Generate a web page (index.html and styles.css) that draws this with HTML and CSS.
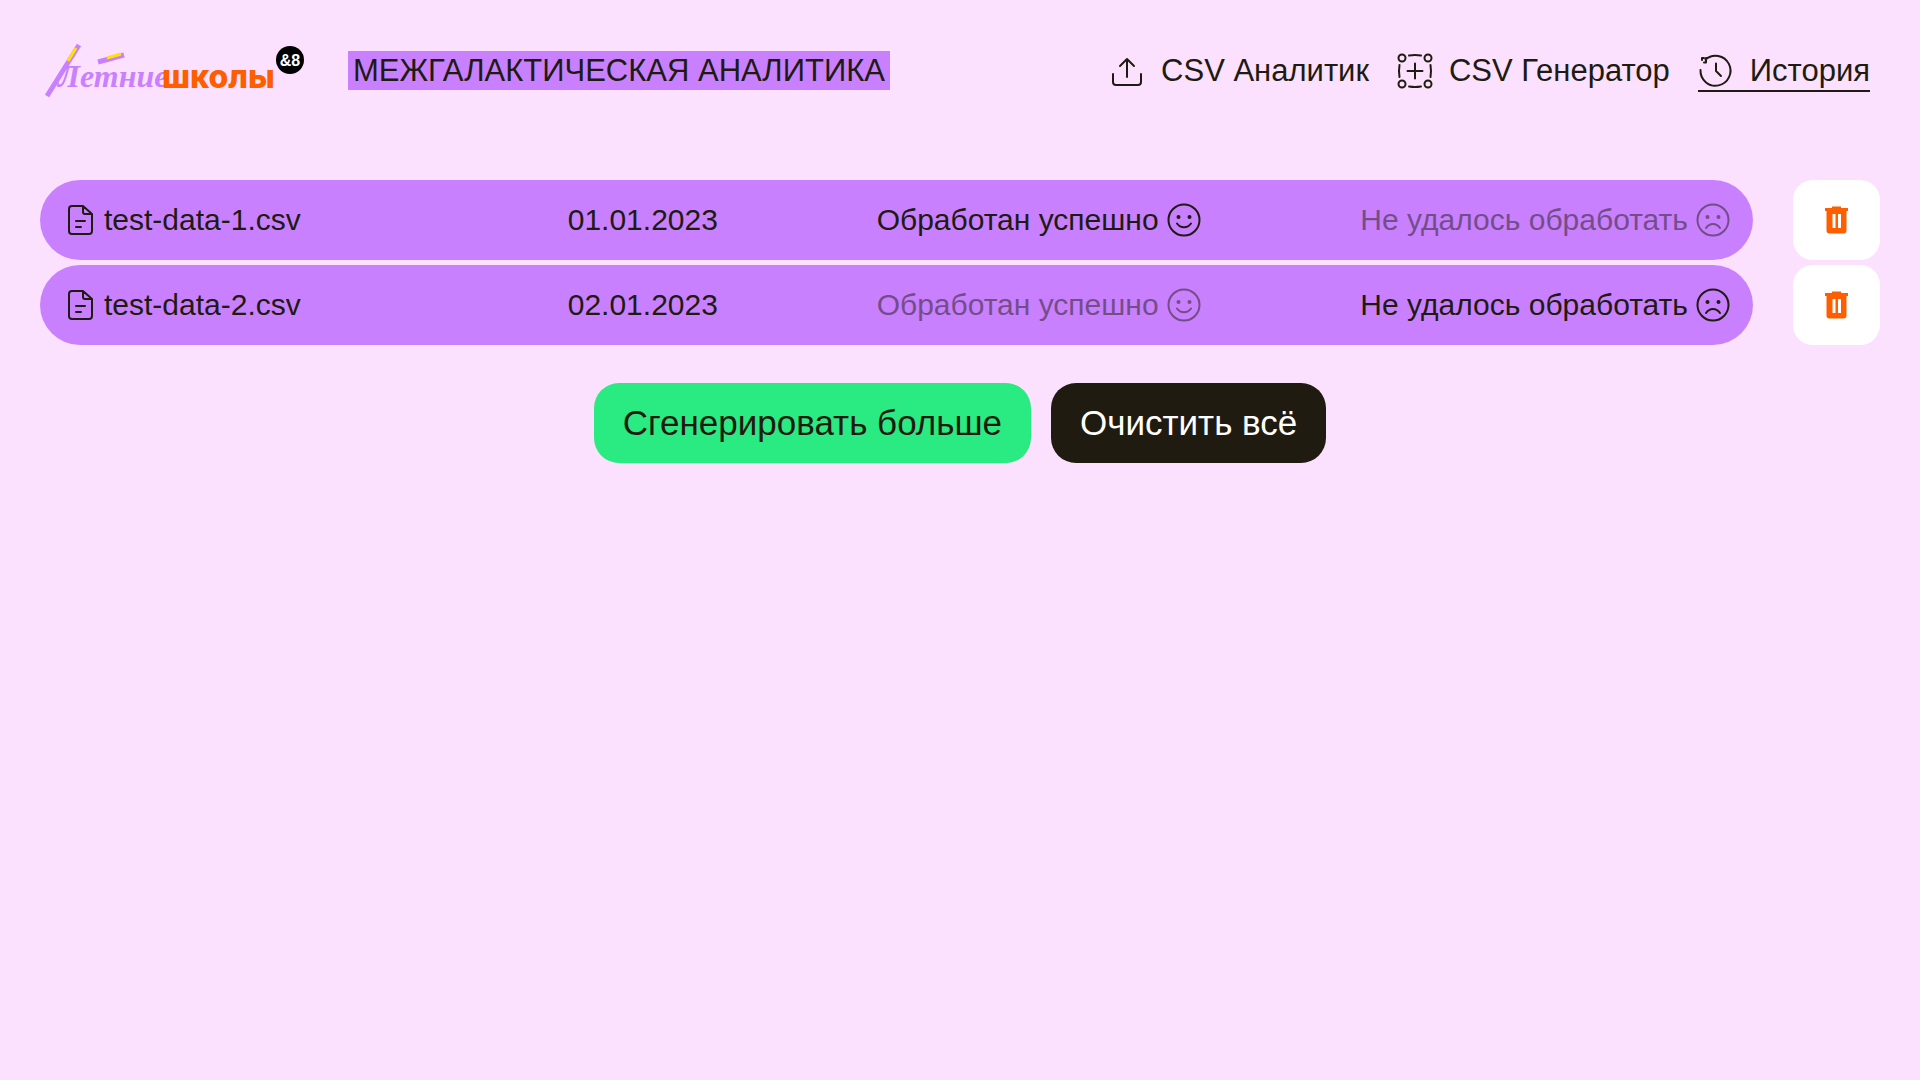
FILE: index.html
```html
<!DOCTYPE html>
<html lang="ru">
<head>
<meta charset="utf-8">
<meta name="viewport" content="width=device-width, initial-scale=1">
<title>Межгалактическая аналитика</title>
<link rel="stylesheet" href="styles.css">
</head>
<body>
<svg class="sprite" aria-hidden="true">
  <symbol id="file" viewBox="0 0 32 36"><path d="M19 4H8a3 3 0 0 0-3 3v22a3 3 0 0 0 3 3h17a3 3 0 0 0 3-3V12zM19 4v6a2 2 0 0 0 2 2h7M12 19h9M12 25h5"/></symbol>
  <symbol id="smile" viewBox="0 0 36 36"><circle cx="18" cy="18" r="15.5"/><path d="M11 21.5c3.500 5 10.500 5 14 0"/><g class="dot"><circle cx="12.500" cy="15" r="2"/><circle cx="23.500" cy="15" r="2"/></g></symbol>
  <symbol id="sad" viewBox="0 0 36 36"><circle cx="18" cy="18" r="15.5"/><path d="M11 26c3.500-5.500 10.500-5.500 14 0"/><g class="dot"><circle cx="12.500" cy="15" r="2"/><circle cx="23.500" cy="15" r="2"/></g></symbol>
  <symbol id="trash" viewBox="0 0 28 28"><path d="M2 2h7V.500h9V2h7v3H2zM3.500 5h20v19.500a3 3 0 0 1-3 3h-14a3 3 0 0 1-3-3zM9.500 8v14h3V8zM15 8v14h3V8z"/></symbol>
</svg>
<header class="header">
  <a class="logo" href="#" aria-label="Летние школы">
    <svg width="264" height="60" viewBox="0 0 264 60">
      <text class="logo-script" x="18" y="47">Летние</text>
      <text class="logo-block" x="122" y="48">школы</text>
      <path class="brush" d="M7 56 L39 5 M58 22l26-7"/>
      <path class="glow" d="M36 8l-8 13M67 18l14-4"/>
      <circle cx="250" cy="20" r="14"/>
      <text class="logo-badge" x="250" y="26">&amp;8</text>
    </svg>
  </a>
  <h1 class="title">МЕЖГАЛАКТИЧЕСКАЯ АНАЛИТИКА</h1>
  <nav class="nav">
    <a class="nav-link" href="#"><svg class="icon" viewBox="0 0 36 36"><path d="M4 21v8a3 3 0 0 0 3 3h22a3 3 0 0 0 3-3v-8M18 24V6M11 13l7-7 7 7"/></svg>CSV Аналитик</a>
    <a class="nav-link" href="#"><svg class="icon" viewBox="0 0 36 36"><circle cx="5" cy="5" r="3.500"/><circle cx="31" cy="5" r="3.500"/><circle cx="5" cy="31" r="3.500"/><circle cx="31" cy="31" r="3.500"/><path d="M12 2.500q6-1 12 0M12 33.500q6 1 12 0M2.500 12q-1 6 0 12M33.500 12q1 6 0 12M18 10.500v15M10.500 18h15"/></svg>CSV Генератор</a>
    <a class="nav-link active" href="#" aria-current="page"><svg class="icon" viewBox="0 0 36 36"><path d="M2.500 17a15 15 0 1 0 5-10.500M7.500 9.500H6M8 5v4.500M4 7V5h2M18 10.500v7.500l5 5"/></svg>История</a>
  </nav>
</header>
<main class="main">
  <ul class="history">
    <li class="entry">
      <div class="record">
        <span class="file"><svg class="icon-file"><use href="#file"/></svg>test-data-1.csv</span>
        <span>01.01.2023</span>
        <span class="status">Обработан успешно<svg class="icon"><use href="#smile"/></svg></span>
        <span class="status off">Не удалось обработать<svg class="icon"><use href="#sad"/></svg></span>
      </div>
      <button class="remove" type="button" aria-label="Удалить test-data-1.csv"><svg class="icon-trash"><use href="#trash"/></svg></button>
    </li>
    <li class="entry">
      <div class="record">
        <span class="file"><svg class="icon-file"><use href="#file"/></svg>test-data-2.csv</span>
        <span>02.01.2023</span>
        <span class="status off">Обработан успешно<svg class="icon"><use href="#smile"/></svg></span>
        <span class="status">Не удалось обработать<svg class="icon"><use href="#sad"/></svg></span>
      </div>
      <button class="remove" type="button" aria-label="Удалить test-data-2.csv"><svg class="icon-trash"><use href="#trash"/></svg></button>
    </li>
  </ul>
  <div class="actions">
    <button class="button generate" type="button">Сгенерировать больше</button>
    <button class="button clear" type="button">Очистить всё</button>
  </div>
</main>
</body>
</html>
```
FILE: styles.css
```css
* { box-sizing: border-box; }
body {
  margin: 0;
  min-height: 100vh;
  background: #fce1ff;
  color: #201b10;
  font: 30px/36px "Liberation Sans", Arial, sans-serif;
}
.sprite { position: absolute; width: 0; height: 0; }
.header {
  display: flex;
  align-items: center;
  height: 140px;
  padding: 0 50px 0 40px;
}
.logo { display: flex; margin-right: 44px; }
.logo-script { font: italic bold 32px "Liberation Serif", serif; fill: #c980ff; }
.logo-block { font: 800 32px Inter, sans-serif; fill: #ff5e00; }
.logo-badge { font: bold 16px "Liberation Sans", sans-serif; fill: #fff; text-anchor: middle; }
.brush { fill: none; stroke: #c980ff; stroke-width: 5; }
.glow { fill: none; stroke: #ffe200; stroke-width: 3; }
.title {
  margin: 0;
  padding: 0 5px;
  background: #c980ff;
  font-size: 31px;
  font-weight: 400;
  line-height: 39px;
}
.nav { display: flex; gap: 28px; margin-left: auto; font-size: 31px; }
.nav-link {
  display: flex;
  align-items: center;
  gap: 16px;
  padding: 5px 0 1px;
  border-bottom: 2px solid transparent;
  color: inherit;
  text-decoration: none;
}
.active { border-color: #201b10; }
.icon, .icon-file {
  width: 36px;
  height: 36px;
  fill: none;
  stroke: currentColor;
  stroke-width: 2;
  stroke-linecap: round;
  stroke-linejoin: round;
}
.icon-file { width: 32px; }
.dot { fill: currentColor; stroke: none; }
.main { padding: 40px; }
.history {
  display: flex;
  flex-direction: column;
  gap: 5px;
  margin: 0;
  padding: 0;
  list-style: none;
}
.entry { display: flex; gap: 40px; }
.record {
  display: flex;
  flex: 1;
  align-items: center;
  justify-content: space-between;
  height: 80px;
  padding: 0 22px 0 24px;
  border-radius: 40px;
  background: #c980ff;
}
.file { display: flex; align-items: center; gap: 8px; width: 345px; }
.status { display: flex; align-items: center; gap: 7px; }
.off { opacity: .5; }
.remove {
  display: grid;
  place-items: center;
  width: 87px;
  border: 0;
  border-radius: 20px;
  background: #fff;
}
.icon-trash { width: 28px; height: 28px; fill: #ff5e00; fill-rule: evenodd; }
.actions { display: flex; justify-content: center; gap: 20px; margin-top: 38px; }
.button {
  height: 80px;
  padding: 0 29px;
  border: 0;
  border-radius: 25px;
  color: inherit;
  font: inherit;
  font-size: 35px;
}
.generate { background: #2aea82; }
.clear { background: #201b10; color: #fff; }
```
